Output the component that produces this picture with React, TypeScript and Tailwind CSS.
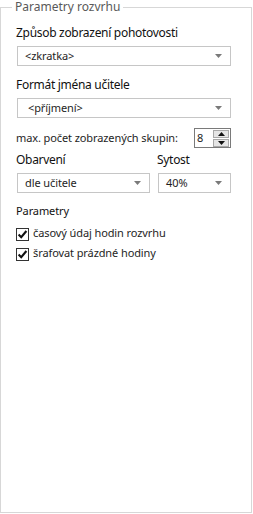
import React from "react";

const font = { fontFamily: '"Noto Sans", "Open Sans", sans-serif' };

function Arrow() {
  return (
    <svg width="7" height="4" viewBox="0 0 7 4" className="shrink-0">
      <path d="M0 0H7L3.5 4Z" fill="#7a7a7a" />
    </svg>
  );
}

function Combo({ text, className }: { text: string; className: string }) {
  return (
    <div
      className={`flex h-[20px] items-center justify-between border border-[#c6c6c6] bg-white pr-[8px] text-[11px] leading-[16px] tracking-[-0.1px] text-[#1e1e1e] ${className}`}
    >
      <span>{text}</span>
      <Arrow />
    </div>
  );
}

function Check({ label }: { label: string }) {
  return (
    <div className="flex h-[20px] items-center gap-[4px] text-[11px] leading-[16px] tracking-[-0.1px] text-[#1e1e1e]">
      <div className="relative top-[1px] flex h-[13px] w-[13px] items-center justify-center border border-[#333] bg-white">
        <svg width="11" height="11" viewBox="0 0 11 11">
          <path d="M1.6 5.6L4.2 8.2L9.4 2" stroke="#111" strokeWidth="2.1" fill="none" />
        </svg>
      </div>
      <span>{label}</span>
    </div>
  );
}

function SpinBtn({ up }: { up: boolean }) {
  return (
    <div className="flex h-[8px] w-[16px] items-center justify-center border border-[#a8a8a8] bg-[#e5e5e5]">
      <svg width="7" height="4" viewBox="0 0 7 4">
        <path d={up ? "M0 4H7L3.5 0Z" : "M0 0H7L3.5 4Z"} fill="#111" />
      </svg>
    </div>
  );
}

const label = "h-[16px] text-[12px] leading-[16px] tracking-[-0.3px] text-[#111]";

export default function App() {
  return (
    <div className="h-[514px] w-[253px] bg-white" style={font}>
      <fieldset className="m-0 h-[513px] w-[252px] border border-[#d7d7d7] px-[15px] pb-0 pt-0">
        <legend className="ml-[-4px] px-[3px] text-[12px] leading-[14px] text-[#595959]">
          Parametry rozvrhu
        </legend>
        <div className="flex flex-col">
          <div className={`mt-[11px] ${label}`}>Způsob zobrazení pohotovosti</div>
          <Combo text="<zkratka>" className="ml-[1px] mt-[5px] w-[214px] pl-[7px]" />
          <div className={`mt-[11px] ${label}`}>Formát jména učitele</div>
          <Combo text="<příjmení>" className="ml-[1px] mt-[5px] w-[214px] pl-[10px]" />
          <div className="mt-[10px] flex h-[20px] items-center">
            <span className="text-[11px] leading-[16px] tracking-[-0.1px] text-[#1e1e1e]">
              max. počet zobrazených skupin:
            </span>
            <div className="ml-auto mr-[5px] flex h-[20px] w-[37px] items-center border border-[#7a7a7a] bg-white">
              <span className="ml-[2px] flex-1 text-[11px] leading-[16px] text-[#1e1e1e]">8</span>
              <div className="mr-[1px] flex flex-col gap-[1px]">
                <SpinBtn up />
                <SpinBtn up={false} />
              </div>
            </div>
          </div>
          <div className="mt-[4px] flex">
            <div className="flex w-[141px] flex-col">
              <div className={label}>Obarvení</div>
              <Combo text="dle učitele" className="ml-[1px] mt-[5px] w-[133px] pl-[7px]" />
            </div>
            <div className="flex flex-col">
              <div className={label}>Sytost</div>
              <Combo text="40%" className="ml-[1px] mt-[5px] w-[73px] pl-[7px]" />
            </div>
          </div>
          <div className="mt-[10px] h-[16px] text-[11px] leading-[16px] tracking-[-0.1px] text-[#111]">
            Parametry
          </div>
          <div className="mt-[4px] flex flex-col">
            <Check label="časový údaj hodin rozvrhu" />
            <Check label="šrafovat prázdné hodiny" />
          </div>
        </div>
      </fieldset>
    </div>
  );
}
